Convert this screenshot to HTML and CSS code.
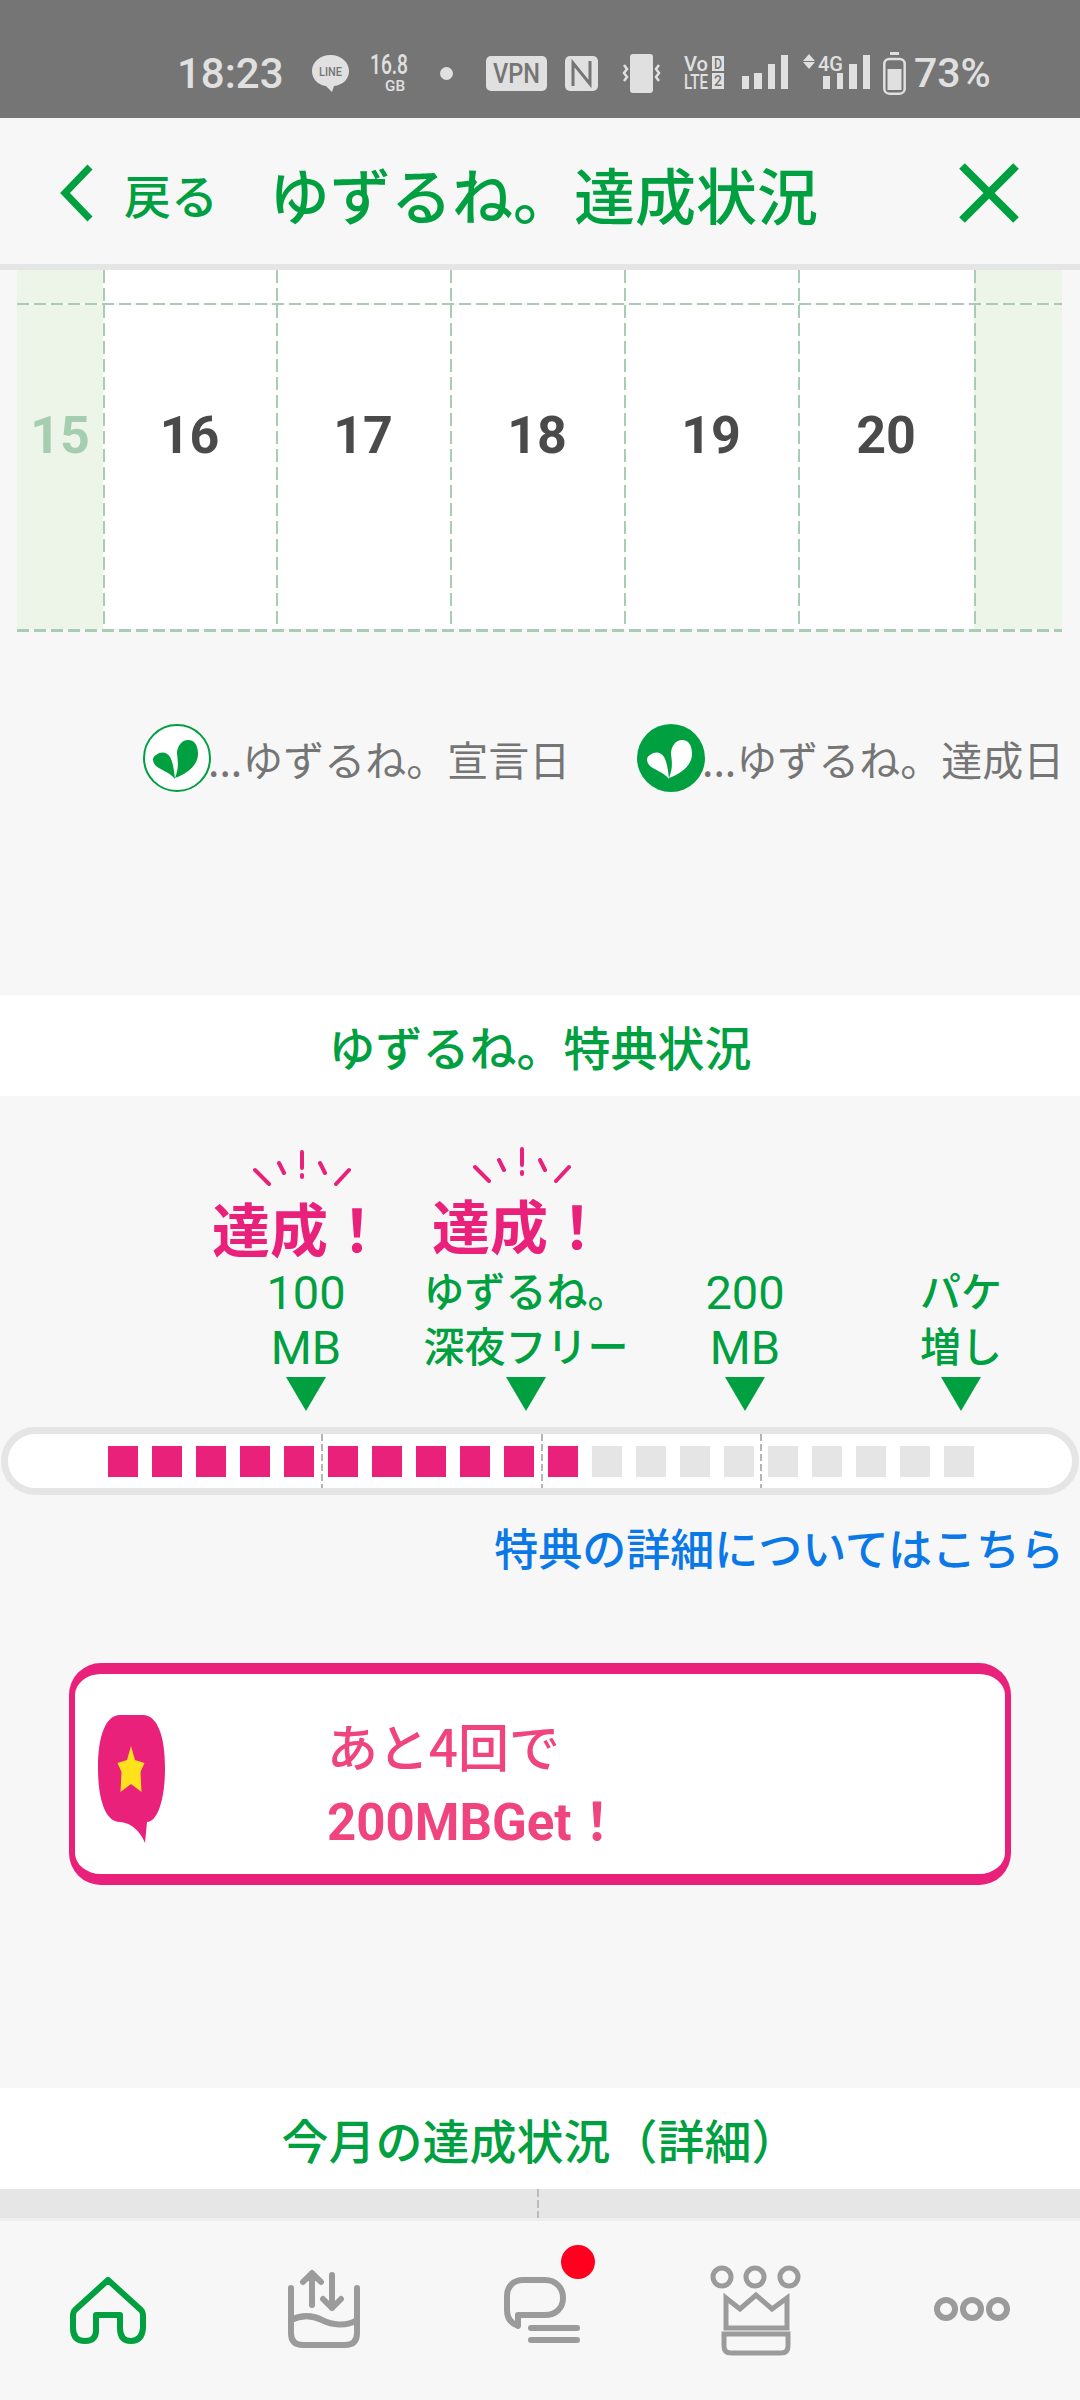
FILE: index.html
```html
<!DOCTYPE html>
<html lang="ja">

<head>
    <meta charset="UTF-8">
    <title>ゆずるね。達成状況</title>
    <link rel="stylesheet" href="styles.css">
</head>

<body>
    <div class="status">
        <span class="time">18:23</span>
        <svg class="st-line" viewBox="0 0 37 37"><path d="M18.500 0C8 0 0 7 0 16c0 8 6 14 14 15l6 6 2-6c9-1 15-7 15-15C37 7 29 0 18.500 0z" fill="#e0e0e0"/><text x="7" y="21" class="st-dark" font-size="13" textLength="23" lengthAdjust="spacingAndGlyphs">LINE</text></svg>
        <svg class="st-data" viewBox="0 0 38 40"><text x="0" y="21" class="st-light" font-size="28" textLength="38" lengthAdjust="spacingAndGlyphs">16.8</text><text x="15" y="38" class="st-light" font-size="14" textLength="20" lengthAdjust="spacingAndGlyphs">GB</text></svg>
        <span class="st-dot"></span>
        <svg class="st-vpn" viewBox="0 0 61 35"><rect width="61" height="35" rx="5" fill="#e0e0e0"/><text x="7" y="27" class="st-dark" font-size="28" textLength="47" lengthAdjust="spacingAndGlyphs">VPN</text></svg>
        <svg class="st-nfc" viewBox="0 0 33 35"><rect width="33" height="35" rx="5" fill="#e0e0e0"/><path d="M8 30V7l17 21V5" fill="none" stroke="#757575" stroke-width="3"/></svg>
        <svg class="st-vib" viewBox="0 0 41 39"><rect x="9" width="23" height="39" rx="3" fill="#e0e0e0"/><path d="M3 11l3 4-3 4 3 4-3 4M38 11l-3 4 3 4-3 4 3 4" fill="none" stroke="#e0e0e0" stroke-width="2.500"/></svg>
        <svg class="st-volte" viewBox="0 0 40 36"><text x="0" y="16" class="st-light" font-size="21" textLength="24" lengthAdjust="spacingAndGlyphs">Vo</text><rect x="28" y="1" width="12" height="15" fill="#e0e0e0"/><text x="30" y="14" class="st-dark" font-size="14" textLength="8" lengthAdjust="spacingAndGlyphs">D</text><text x="0" y="34" class="st-light" font-size="21" textLength="24" lengthAdjust="spacingAndGlyphs">LTE</text><rect x="28" y="18" width="12" height="16" fill="#e0e0e0"/><text x="30" y="31" class="st-dark" font-size="14" textLength="8" lengthAdjust="spacingAndGlyphs">2</text></svg>
        <svg class="st-sig" viewBox="0 0 48 36"><path d="M1 21h7v13H1zM13 18h8v16h-8zM27 9h7v25h-7zM40 0h7v34h-7z" fill="#e0e0e0"/></svg>
        <svg class="st-sig2" viewBox="0 0 67 40"><path d="M6 1l6 7H0zM6 16l6-7H0z" fill="#e0e0e0"/><text x="15" y="18" class="st-light" font-size="21" textLength="25" lengthAdjust="spacingAndGlyphs">4G</text><path d="M20 23h7v13h-7zM34 20h6v16h-6zM46 11h8v25h-8zM60 2h7v34h-7z" fill="#e0e0e0"/></svg>
        <svg class="st-batt" viewBox="0 0 23 43"><path d="M7 0h9v3H7z" fill="#e0e0e0"/><rect x="1.300" y="7" width="20.400" height="34.700" rx="5" fill="none" stroke="#e0e0e0" stroke-width="2.500"/><rect x="4.500" y="17" width="14" height="21" fill="#e0e0e0"/></svg>
        <span class="percent">73%</span>
    </div>

    <div class="head">
        <svg class="back-icon" viewBox="0 0 34 58"><path d="M30 3L5 29l25 26" fill="none" stroke="#00a040" stroke-width="7"/></svg>
        <span class="back-text">戻る</span>
        <span class="head-title">ゆずるね。達成状況</span>
        <svg class="close-icon" viewBox="0 0 60 60"><path d="M3 3l54 54M57 3L3 57" fill="none" stroke="#00a040" stroke-width="8"/></svg>
    </div>

    <div class="main">
        <div class="calendar">
            <div class="week week-top">
                <div class="cell off"></div>
                <div class="cell"></div>
                <div class="cell"></div>
                <div class="cell"></div>
                <div class="cell"></div>
                <div class="cell"></div>
                <div class="cell off"></div>
            </div>
            <div class="dash-h"></div>
            <div class="week week-main">
                <div class="cell off">15</div>
                <div class="cell">16</div>
                <div class="cell">17</div>
                <div class="cell">18</div>
                <div class="cell">19</div>
                <div class="cell">20</div>
                <div class="cell off"></div>
            </div>
            <div class="dash-h dash-bottom"></div>
        </div>

        <div class="legend">
            <div class="legend-item">
                <svg class="leaf" viewBox="0 0 68 68"><circle cx="34" cy="34" r="33" fill="#fff" stroke="#00a040" stroke-width="2"/><path d="M32 54C36 44 35 38 34 30 34 22 39 16 45 16 52 16 55 22 55 30 55 41 44 50 32 54zM32 55C26 48 18 46 13 42 9 38 9 33 13 31 18 27 24 28 27 33 30 38 31 46 32 55z" fill="#00a040"/></svg>
                <span class="legend-text">...ゆずるね。宣言日</span>
            </div>
            <div class="legend-item">
                <svg class="leaf" viewBox="0 0 68 68"><circle cx="34" cy="34" r="34" fill="#00a040"/><path d="M32 54C36 44 35 38 34 30 34 22 39 16 45 16 52 16 55 22 55 30 55 41 44 50 32 54zM32 55C26 48 18 46 13 42 9 38 9 33 13 31 18 27 24 28 27 33 30 38 31 46 32 55z" fill="#fff"/></svg>
                <span class="legend-text">...ゆずるね。達成日</span>
            </div>
        </div>

        <div class="band band-first">ゆずるね。特典状況</div>

        <div class="reward">
            <div class="markers">
                <div class="marker">
                    <svg class="spark" viewBox="0 0 98 36"><path d="M2 20l14 14M26 13l5 10M49 2v16M49 25v2M67 13l5 10M96 20L83 34" fill="none" stroke="#e9217a" stroke-width="4" stroke-linecap="round"/></svg>
                    <div class="done">達成！</div>
                    <div class="label num">100<br>MB</div>
                    <div class="tri"></div>
                </div>
                <div class="marker">
                    <svg class="spark" viewBox="0 0 98 36"><path d="M2 20l14 14M26 13l5 10M49 2v16M49 25v2M67 13l5 10M96 20L83 34" fill="none" stroke="#e9217a" stroke-width="4" stroke-linecap="round"/></svg>
                    <div class="done">達成！</div>
                    <div class="label">ゆずるね。<br>深夜フリー</div>
                    <div class="tri"></div>
                </div>
                <div class="marker">
                    <div class="label num">200<br>MB</div>
                    <div class="tri"></div>
                </div>
                <div class="marker">
                    <div class="label">パケ<br>増し</div>
                    <div class="tri"></div>
                </div>
            </div>

            <div class="bar">
                <span class="seg on"></span><span class="seg on"></span><span class="seg on"></span><span class="seg on"></span><span class="seg on"></span>
                <span class="seg on"></span><span class="seg on"></span><span class="seg on"></span><span class="seg on"></span><span class="seg on"></span>
                <span class="seg on"></span><span class="seg"></span><span class="seg"></span><span class="seg"></span><span class="seg"></span>
                <span class="seg"></span><span class="seg"></span><span class="seg"></span><span class="seg"></span><span class="seg"></span>
                <i class="tick tick1"></i><i class="tick tick2"></i><i class="tick tick3"></i>
            </div>

            <div class="detail-link">特典の詳細についてはこちら</div>

            <div class="card">
                <svg class="bubble" viewBox="0 0 67 128">
                    <path d="M22 0h23c14 0 22 20 22 53s-8 54-18 54l-2 21c-4-10-12-20-25-21C8 107 0 86 0 53S8 0 22 0z" fill="#e9217a"/>
                    <path d="M33 31l4 14 9.500 3-4 9 1 20-10.500-8-10.500 8 1-20-4-9 9.500-3z" fill="#ffe11e"/>
                </svg>
                <div class="card-text">
                    <div>あと4回で</div>
                    <div class="card-strong">200MBGet！</div>
                </div>
            </div>
        </div>

        <div class="band">今月の達成状況（詳細）</div>
        <div class="strip"><i class="strip-tick"></i></div>
    </div>

    <div class="nav">
        <div class="nav-item">
            <svg class="nav-icon" viewBox="0 0 100 100"><path d="M50 20L17 50q-2 2-2 6v12q0 13 12 13t11-13V55h24v13q0 13 11 13t12-13V56q0-4-2-6z" fill="none" stroke="#00a040" stroke-width="6" stroke-linejoin="round"/></svg>
        </div>
        <div class="nav-item">
            <svg class="nav-icon" viewBox="0 0 100 100">
                <g fill="none" stroke="#9b9b9b" stroke-width="6" stroke-linecap="round" stroke-linejoin="round">
                    <path d="M17 28v45q0 12 12 12h42q12 0 12-12V28"/>
                    <path d="M17 60C27 55 38 55 48 60S72 67 83 60"/>
                    <path d="M38 16v29M29 22l9-9 9 9M58 15v33M49 39l9 9 9-9"/>
                </g>
            </svg>
        </div>
        <div class="nav-item">
            <svg class="nav-icon" viewBox="0 0 100 100">
                <g fill="none" stroke="#9b9b9b" stroke-width="6" stroke-linecap="round" stroke-linejoin="round">
                    <path d="M28 55H55C66 55 73 48 73 38 73 28 66 20 55 20H33C23 20 17 27 17 36V50Q17 62 28 66z"/>
                    <path d="M41 68h46M41 80h46"/>
                </g>
            </svg>
            <span class="badge"></span>
        </div>
        <div class="nav-item">
            <svg class="nav-icon" viewBox="0 0 100 100">
                <g fill="none" stroke="#9b9b9b" stroke-width="5">
                    <circle cx="16" cy="17" r="9"/><circle cx="49" cy="17" r="9"/><circle cx="83" cy="17" r="9"/>
                    <path d="M20 38l14 11 16-14 16 14 15-11v30H20z"/>
                    <path d="M18 74h64v12q0 7-7 7H25q-7 0-7-7z"/>
                </g>
            </svg>
        </div>
        <div class="nav-item">
            <svg class="nav-icon" viewBox="0 0 100 100"><g fill="none" stroke="#9b9b9b" stroke-width="6"><circle cx="24" cy="49" r="9"/><circle cx="50" cy="49" r="9"/><circle cx="76" cy="49" r="9"/></g></svg>
        </div>
    </div>
</body>

</html>
```
FILE: styles.css
```css
* {
    box-sizing: border-box;
}
body {
    margin: 0;
    width: 1080px;
    height: 2400px;
    overflow: hidden;
    display: flex;
    flex-direction: column;
    background: #f7f7f7;
    font-family: "Noto Sans CJK JP", "Noto Sans", sans-serif;
    color: #00a040;
}

/* status bar */
.status {
    height: 118px;
    flex: none;
    background: #757575;
    color: #e0e0e0;
    display: flex;
    align-items: center;
    padding-top: 28px;
    padding-left: 177px;
    font-family: Roboto, sans-serif;
}
.status svg {
    flex: none;
    overflow: visible;
}
.st-light {
    fill: #e0e0e0;
    font-weight: 500;
}
.st-dark {
    fill: #757575;
    font-weight: 500;
}
.time {
    width: 135px;
    font-size: 42px;
    font-weight: 500;
}
.st-line {
    width: 37px;
    height: 37px;
    margin-right: 21px;
}
.st-data {
    width: 38px;
    height: 40px;
    margin-right: 32px;
}
.st-dot {
    width: 13px;
    height: 13px;
    border-radius: 50%;
    background: #e0e0e0;
    margin-right: 33px;
}
.st-vpn {
    width: 61px;
    height: 35px;
    margin-right: 18px;
}
.st-nfc {
    width: 33px;
    height: 35px;
    margin-right: 23px;
}
.st-vib {
    width: 41px;
    height: 39px;
    margin-right: 22px;
}
.st-volte {
    width: 40px;
    height: 36px;
    margin-right: 17px;
}
.st-sig {
    width: 48px;
    height: 36px;
    margin-right: 14px;
}
.st-sig2 {
    width: 67px;
    height: 40px;
    margin-right: 13px;
}
.st-batt {
    width: 23px;
    height: 43px;
    margin-right: 8px;
}
.percent {
    font-size: 41px;
    font-weight: 500;
}

/* header */
.head {
    height: 152px;
    flex: none;
    display: flex;
    align-items: center;
    background: #f7f7f7;
    border-bottom: 6px solid #e5e5e5;
    padding-left: 60px;
    padding-top: 4px;
}
.back-icon {
    width: 34px;
    height: 58px;
    margin-right: 30px;
}
.back-text {
    width: 145px;
    font-size: 47px;
    font-weight: 500;
}
.head-title {
    width: 690px;
    font-size: 61px;
    font-weight: 500;
    white-space: nowrap;
}
.close-icon {
    width: 60px;
    height: 60px;
}

.main {
    flex: 1;
    min-height: 0;
    display: flex;
    flex-direction: column;
}

/* calendar */
.calendar {
    margin: 0 18px 0 17px;
}
.week {
    display: grid;
    grid-template-columns: 86px 173px 174px 174px 174px 176px 88px;
}
.week-top {
    height: 33px;
}
.week-main {
    height: 324px;
}
.cell {
    background-color: #fff;
    background-image: repeating-linear-gradient(to bottom, #a8cdb4 0 13px, transparent 13px 18px);
    background-size: 2px 100%;
    background-repeat: no-repeat;
    display: flex;
    align-items: center;
    justify-content: center;
    font-family: Roboto, sans-serif;
    font-size: 52px;
    font-weight: 700;
    color: #4a4a4a;
}
.week-main .cell {
    padding-bottom: 64px;
}
.cell.off {
    background-color: #edf5e9;
    color: #a5cdb0;
}
.cell.off:first-child {
    background-image: none;
}
.dash-h {
    height: 2px;
    background: repeating-linear-gradient(to right, #a8cdb4 0 12px, transparent 12px 17px);
}
.dash-bottom {
    height: 3px;
}

/* legend */
.legend {
    display: flex;
    margin-top: 92px;
    padding-left: 143px;
    height: 68px;
    color: #757575;
    font-size: 41px;
}
.legend-item {
    display: flex;
    align-items: center;
    width: 494px;
    flex: none;
    white-space: nowrap;
}
.legend-text {
    margin-left: -3px;
}
.leaf {
    width: 68px;
    height: 68px;
    flex: none;
}

/* section bands */
.band {
    height: 101px;
    flex: none;
    background: #fff;
    font-size: 47px;
    font-weight: 500;
    line-height: 101px;
    text-align: center;
}
.band-first {
    margin-top: 203px;
}

/* reward */
.reward {
    height: 992px;
    flex: none;
    padding-top: 51px;
}
.markers {
    display: grid;
    grid-template-columns: 220px 220px 218px 214px;
    height: 264px;
    margin-left: 196px;
    align-items: end;
}
.marker {
    display: flex;
    flex-direction: column;
    align-items: center;
}
.spark {
    width: 98px;
    height: 36px;
    margin-right: 8px;
}
.done {
    font-size: 58px;
    font-weight: 700;
    line-height: 60px;
    margin-top: 11px;
    margin-bottom: 8px;
    margin-right: 14px;
    color: #e9217a;
    white-space: nowrap;
}
.label {
    font-size: 41px;
    font-weight: 500;
    line-height: 55px;
    text-align: center;
    white-space: nowrap;
}
.label.num {
    font-family: Roboto, sans-serif;
    font-size: 47px;
    font-weight: 400;
    margin-bottom: -3px;
}
.tri {
    width: 0;
    height: 0;
    margin-top: 5px;
    border-top: 34px solid #00a040;
    border-left: 20px solid transparent;
    border-right: 20px solid transparent;
}
.bar {
    position: relative;
    height: 68px;
    margin: 16px 1px 0;
    border: 7px solid #e5e5e5;
    border-radius: 34px;
    background: #fff;
    display: flex;
    align-items: center;
    gap: 14px;
    padding-left: 100px;
}
.seg {
    width: 30px;
    height: 31px;
    background: #e5e5e5;
}
.seg.on {
    background: #e9217a;
}
.tick {
    position: absolute;
    top: 0;
    bottom: 0;
    width: 2px;
    background: repeating-linear-gradient(to bottom, #b5b5b5 0 7px, transparent 7px 10px);
}
.tick1 {
    left: 313px;
}
.tick2 {
    left: 533px;
}
.tick3 {
    left: 752px;
}
.detail-link {
    margin-top: 22px;
    padding-right: 16px;
    font-size: 44px;
    line-height: 60px;
    font-weight: 500;
    text-align: right;
    color: #0a78e6;
}
.card {
    width: 942px;
    height: 222px;
    margin: 86px 0 0 69px;
    background: #fff;
    border: solid #e9217a;
    border-width: 11px 6px;
    border-radius: 32px;
    display: flex;
    align-items: center;
    padding-left: 23px;
}
.bubble {
    width: 67px;
    height: 128px;
    flex: none;
    margin-top: 10px;
    margin-right: 162px;
}
.card-text {
    color: #f0447f;
    font-size: 51px;
    font-weight: 500;
    line-height: 77px;
    margin-top: 20px;
}
.card-strong {
    font-family: Roboto, "Noto Sans CJK JP", sans-serif;
    font-weight: 700;
}
.strip {
    height: 32px;
    flex: none;
    background: #e6e6e6;
    border-bottom: 3px solid #eeeeee;
    display: flex;
    justify-content: center;
}
.strip-tick {
    width: 2px;
    margin-left: -4px;
    background: repeating-linear-gradient(to bottom, #bbb 0 8px, transparent 8px 11px);
}

/* bottom nav */
.nav {
    height: 179px;
    flex: none;
    display: flex;
    background: #f7f7f7;
}
.nav-item {
    position: relative;
    flex: 1;
    display: flex;
    justify-content: center;
    padding-top: 39px;
}
.nav-icon {
    width: 100px;
    height: 100px;
}
.badge {
    position: absolute;
    left: 129px;
    top: 24px;
    width: 34px;
    height: 34px;
    border-radius: 50%;
    background: #ff001e;
}
```
